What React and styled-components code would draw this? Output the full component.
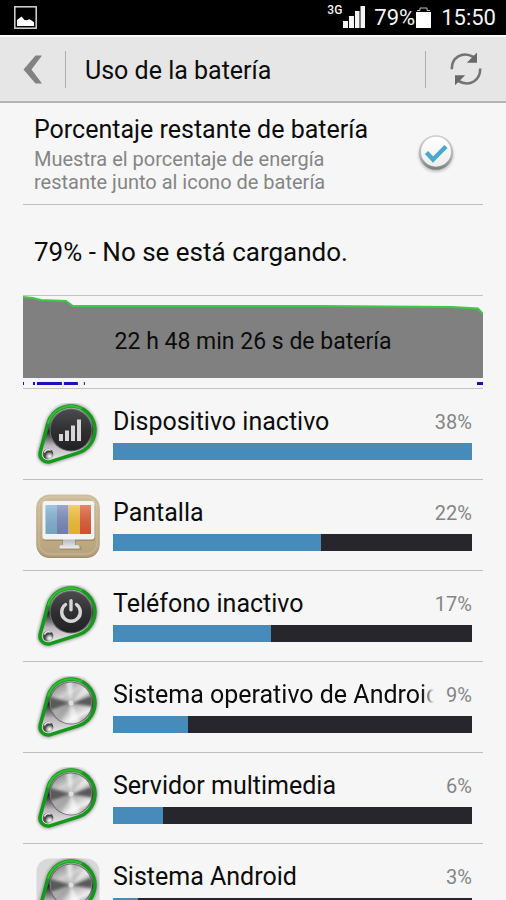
import React from 'react';
import styled, { createGlobalStyle } from 'styled-components';

const GlobalStyle = createGlobalStyle`
  *, *::before, *::after { box-sizing: border-box; }
  body { margin: 0; background: #f6f6f6; }
  body, button, input { font-family: Roboto, "Noto Sans", sans-serif; }
`;

const Screen = styled.div`
  display: flex;
  flex-direction: column;
  height: 100vh;
  background: #f6f6f6;
  color: #0c0c0c;
`;

const StatusBar = styled.div`
  flex: none;
  display: flex;
  align-items: center;
  justify-content: space-between;
  height: 35px;
  padding: 0 9px 0 14px;
  background: #000;
  color: #f4f4f4;
`;

const StatusGroup = styled.div`
  display: flex;
  align-items: center;
`;

const NetworkType = styled.span`
  align-self: flex-start;
  margin-right: 1px;
  font-size: 12px;
  font-weight: 500;
  line-height: 12px;
`;

const StatusText = styled.span`
  margin: 0 1px 0 ${(p) => p.$gap}px;
  font-size: 22px;
  line-height: 28px;
`;

const ActionBar = styled.header`
  flex: none;
  display: flex;
  align-items: center;
  height: 68px;
  border-top: 2px solid #fafafa;
  border-bottom: 2px solid #b4b4b4;
  background: #e6e6e6;
`;

const IconButton = styled.button`
  display: grid;
  place-items: center;
  width: ${(p) => p.$width}px;
  height: 64px;
  padding: 0;
  border: 0;
  background: none;
  cursor: pointer;
`;

const Divider = styled.span`
  width: 1px;
  height: 37px;
  background: #adadad;
`;

const PageTitle = styled.h1`
  flex: 1;
  margin: 0;
  padding: 3px 0 0 19px;
  font-size: 25px;
  font-weight: 400;
  line-height: 32px;
`;

const Content = styled.main`
  flex: 1;
  min-height: 0;
  padding: 0 23px;
  overflow-y: auto;
  scrollbar-width: none;
`;

const Setting = styled.label`
  display: flex;
  align-items: center;
  justify-content: space-between;
  height: 102px;
  padding: 0 26px 0 11px;
  border-bottom: 1px solid #bfbfbf;
  cursor: pointer;
`;

const SettingText = styled.span`
  display: flex;
  flex-direction: column;
  gap: 2px;
`;

const SettingTitle = styled.span`
  font-size: 25px;
  line-height: 32px;
`;

const SettingHint = styled.span`
  max-width: 320px;
  color: #858585;
  font-size: 20px;
  line-height: 23px;
`;

const RoundCheck = styled.span`
  display: grid;
  flex: none;
  width: 42px;
  height: 42px;

  & > * { grid-area: 1 / 1; }
`;

const CheckInput = styled.input`
  width: 42px;
  height: 42px;
  margin: 0;
  opacity: 0;
  cursor: pointer;

  &:not(:checked) + svg .tick { display: none; }
`;

const ChargeState = styled.p`
  margin: 0;
  padding: 4px 11px 0;
  font-size: 26px;
  line-height: 86px;
`;

const History = styled.section`
  display: grid;
  grid-template-rows: 82px 10px;
  border: solid #c4c4c4;
  border-width: 1px 0;
`;

const HistoryPlot = styled.div`
  display: grid;
  align-items: center;

  & > * { grid-area: 1 / 1; }
`;

const PlotSvg = styled.svg`
  display: block;
  width: 100%;
  height: 82px;
`;

const HistoryLabel = styled.span`
  padding-top: 10px;
  text-align: center;
  font-size: 23px;
  line-height: 28px;
`;

const ActivityStrip = styled.svg`
  display: block;
  width: 100%;
  height: 9px;
`;

const UsageList = styled.ul`
  margin: 0;
  padding: 0;
  list-style: none;
`;

const UsageRow = styled.li`
  display: grid;
  grid-template-columns: 64px minmax(0, 1fr);
  column-gap: 13px;
  height: 91px;
  padding: 14px 11px 0 13px;
  border-bottom: 1px solid #bfbfbf;
`;

const UsageBody = styled.div`
  display: flex;
  flex-direction: column;
  gap: 2px;
`;

const UsageHead = styled.div`
  display: flex;
  align-items: center;
  gap: 12px;
  height: 38px;
`;

const UsageName = styled.span`
  flex: 1;
  min-width: 0;
  overflow: hidden;
  white-space: nowrap;
  font-size: 25px;
  line-height: 36px;
  mask-image: ${(p) => (p.$fade ? 'linear-gradient(to left, transparent, #000 12px)' : 'none')};
`;

const UsagePercent = styled.span`
  color: #858585;
  font-size: 20px;
  line-height: 36px;
`;

const Meter = styled.div`
  height: 17px;
  background: #27262c;
`;

const MeterFill = styled.div`
  height: 100%;
  background: #478bba;
`;

const SharedDefs = styled.svg`
  display: block;
`;

function PictureIcon() {
  return (
    <svg width="23" height="23" viewBox="0 0 23 23" aria-hidden="true">
      <rect x="0.8" y="0.8" width="21.4" height="21.4" fill="none" stroke="#d8d8d8" strokeWidth="1.5" />
      <path d="M3 20V14l4.500-3.500 3 3.500 2 .3 3-1 2.500 1.500 2 1.500V20z" fill="#fff" />
    </svg>
  );
}

function SignalIcon() {
  return (
    <svg width="23" height="23" viewBox="0 0 23 23" fill="#f4f4f4" aria-hidden="true">
      <rect x="0" y="15" width="5" height="7" />
      <rect x="6" y="10" width="5" height="12" />
      <rect x="12" y="5" width="4.500" height="17" />
      <rect x="17.500" y="0" width="4.500" height="22" />
    </svg>
  );
}

function BatteryIcon() {
  return (
    <svg width="15" height="21" viewBox="0 0 15 21" aria-hidden="true">
      <path d="M1 3.500h3V1h7v2.500h3" fill="none" stroke="#bdbdbd" strokeWidth="1" />
      <rect x="0" y="5" width="15" height="16" fill="#fff" />
    </svg>
  );
}

function BackIcon() {
  return (
    <svg width="20" height="29" viewBox="0 0 20 29" aria-hidden="true">
      <path d="M12.500 0.500H19L8.500 14.500 19 28.500h-6.500L0.500 14.500z" fill="#828282" />
    </svg>
  );
}

function RefreshIcon() {
  return (
    <svg width="32" height="34" viewBox="0 0 32 34" aria-hidden="true">
      <g fill="none" stroke="#737373" strokeWidth="2.600">
        <path d="M1.800 17.300C1.500 6 12-1.500 23.500 5" />
        <path d="M30.200 16.500C30.500 28 20 35.500 8.500 29" />
      </g>
      <path d="M27 0.500V10.800H16.800zM5 33.200V23.200H15.200z" fill="#686868" />
    </svg>
  );
}

function CheckIcon() {
  return (
    <svg width="42" height="42" viewBox="0 0 42 42" aria-hidden="true">
      <defs>
        <linearGradient id="check-face" x1="0" y1="0" x2="0" y2="1">
          <stop offset="0" stopColor="#ffffff" />
          <stop offset="1" stopColor="#ededed" />
        </linearGradient>
        <linearGradient id="check-rim" x1="0" y1="0" x2="0" y2="1">
          <stop offset="0" stopColor="#cfcfcf" />
          <stop offset="0.600" stopColor="#b4b4b4" />
          <stop offset="1" stopColor="#7c7c7c" />
        </linearGradient>
        <filter id="check-soft" x="-20%" y="-20%" width="140%" height="140%">
          <feGaussianBlur stdDeviation="1.500" />
        </filter>
      </defs>
      <circle cx="21" cy="21.500" r="17" fill="#b5b5b5" filter="url(#check-soft)" />
      <circle cx="21" cy="19.500" r="17.200" fill="url(#check-rim)" />
      <circle cx="21" cy="18.700" r="15" fill="url(#check-face)" />
      <path className="tick" d="M11.500 19.500l6.500 7 13-13" fill="none" stroke="#4aa9c9" strokeWidth="4.400" />
    </svg>
  );
}

function IconDefs() {
  return (
    <SharedDefs width="0" height="0" aria-hidden="true">
      <defs>
        <linearGradient id="dark-disc" x1="0" y1="0" x2="0" y2="1">
          <stop offset="0" stopColor="#4b4b4d" />
          <stop offset="0.500" stopColor="#303032" />
          <stop offset="1" stopColor="#222224" />
        </linearGradient>
        <linearGradient id="metal-disc" x1="0.200" y1="0" x2="0.700" y2="1">
          <stop offset="0" stopColor="#858585" />
          <stop offset="0.300" stopColor="#cfcfcf" />
          <stop offset="0.550" stopColor="#aaaaaa" />
          <stop offset="0.850" stopColor="#ececec" />
          <stop offset="1" stopColor="#a0a0a0" />
        </linearGradient>
        <linearGradient id="shell" x1="0" y1="0" x2="0" y2="1">
          <stop offset="0" stopColor="#b5bab5" />
          <stop offset="0.250" stopColor="#8d928d" />
          <stop offset="0.450" stopColor="#222422" />
          <stop offset="0.700" stopColor="#b9b3ba" />
          <stop offset="1" stopColor="#efefef" />
        </linearGradient>
        <radialGradient id="knob" cx="0.650" cy="0.720" r="0.750">
          <stop offset="0" stopColor="#ffffff" />
          <stop offset="0.250" stopColor="#c4c4c4" />
          <stop offset="0.600" stopColor="#3f3f3f" />
          <stop offset="1" stopColor="#777777" />
        </radialGradient>
        <linearGradient id="tan-tile" x1="0" y1="0" x2="0" y2="1">
          <stop offset="0" stopColor="#cfbf9f" />
          <stop offset="0.500" stopColor="#c3af8a" />
          <stop offset="1" stopColor="#b7a27c" />
        </linearGradient>
        <linearGradient id="screen-shine" x1="0" y1="0" x2="0" y2="1">
          <stop offset="0" stopColor="#ffffff" stopOpacity="0.300" />
          <stop offset="1" stopColor="#555555" stopOpacity="0.100" />
        </linearGradient>
        <linearGradient id="stand" x1="0" y1="0" x2="0" y2="1">
          <stop offset="0" stopColor="#aab0b4" />
          <stop offset="1" stopColor="#eeeeee" />
        </linearGradient>
        <clipPath id="disc-clip"><circle cx="35" cy="27" r="20.500" /></clipPath>
        <filter id="soft" x="-30%" y="-30%" width="160%" height="160%">
          <feGaussianBlur stdDeviation="1.500" />
        </filter>
      </defs>
    </SharedDefs>
  );
}

const DROP = 'M11.8 20.8A24 24 0 1 1 42.2 49.9L14.4 58.600A8 8 0 0 1 4.300 48.900Z';

function DropIcon({ kind }) {
  const metal = kind === 'metal' || kind === 'tile';
  return (
    <svg width="64" height="64" viewBox="0 0 64 64" aria-hidden="true">
      {kind === 'tile' && <rect x="0.500" y="0.500" width="63" height="63" rx="13" fill="#d9d9db" />}
      <path d={DROP} fill="#8d858b" stroke="#91858f" strokeWidth="5.500" filter="url(#soft)" opacity="0.800" />
      <path d={DROP} fill="url(#shell)" stroke="#149a1b" strokeWidth="3.600" />
      <path d="M11.8 20.8A24 24 0 0 1 46 5.700" fill="none" stroke="#35bd38" strokeWidth="2" />
      <circle cx="35" cy="27" r="21.500" fill="#716a70" />
      <circle cx="35" cy="27" r="20.500" fill={metal ? 'url(#metal-disc)' : 'url(#dark-disc)'} />
      {metal && (
        <g clipPath="url(#disc-clip)">
          <g filter="url(#soft)">
            <path d="M35 27L12 20V35zM35 27L58 19V31z" fill="#404040" opacity="0.800" />
            <path d="M35 27L29 3H37zM35 27L33 50H47zM35 27L51 7 58 15z" fill="#fff" opacity="0.600" />
            <path d="M35 27L15 43 24 50z" fill="#858585" opacity="0.400" />
          </g>
          <circle cx="35" cy="27" r="2.500" fill="#fff" opacity="0.600" />
        </g>
      )}
      {kind === 'signal' && (
        <g fill="#d6d6d6">
          <rect x="23" y="31" width="4" height="7" />
          <rect x="29" y="27.500" width="4" height="10.500" />
          <rect x="35" y="22.500" width="4" height="15.500" />
          <rect x="41" y="16.500" width="4" height="21.500" />
        </g>
      )}
      {kind === 'power' && (
        <g fill="none" stroke="#d6d6d6" strokeWidth="3.400" strokeLinecap="round">
          <path d="M29.500 19.500a9.300 9.300 0 1 0 11 0" />
          <path d="M35 15.800v9" />
        </g>
      )}
      <circle cx="12" cy="51" r="6" fill="#dcdcdc" />
      <circle cx="12" cy="51" r="5.400" fill="url(#knob)" />
      <path d="M8.500 49.500a4 4 0 0 1 6-2.200" fill="none" stroke="#eee" strokeWidth="1.400" />
    </svg>
  );
}

function MonitorIcon() {
  return (
    <svg width="64" height="64" viewBox="0 0 64 64" aria-hidden="true">
      <rect x="0.500" y="1" width="63" height="63" rx="13" fill="#a18e6c" />
      <rect x="0.500" y="0.500" width="63" height="62" rx="13" fill="url(#tan-tile)" />
      <rect x="3" y="3" width="58" height="57" rx="11" fill="none" stroke="#e3d7be" strokeWidth="1" opacity="0.400" />
      <rect x="7" y="9" width="52" height="38" rx="3" fill="#8c7a5c" opacity="0.600" />
      <path d="M26 45h14v7h3.500q2 0 2 2v2h-22v-2q0-2 2-2H26z" fill="#8c7a5c" opacity="0.500" />
      <path d="M27 44h12v7h2.500q2 0 2 2v1.500h-20V53q0-2 2-2H27z" fill="url(#stand)" />
      <rect x="6.500" y="7" width="52" height="38.500" rx="3" fill="#f3f3f4" />
      <rect x="9.500" y="11" width="11.500" height="29" fill="#7aaed0" />
      <rect x="21" y="11" width="11.500" height="29" fill="#7283b6" />
      <rect x="32.500" y="11" width="11.500" height="29" fill="#f2bb2c" />
      <rect x="44" y="11" width="11" height="29" fill="#dc5429" />
      <rect x="9.500" y="11" width="45.500" height="29" fill="url(#screen-shine)" />
    </svg>
  );
}

const CONSUMERS = [
  { name: 'Dispositivo inactivo', percent: 38, share: 100, icon: 'signal' },
  { name: 'Pantalla', percent: 22, share: 58, icon: 'monitor' },
  { name: 'Teléfono inactivo', percent: 17, share: 44, icon: 'power' },
  { name: 'Sistema operativo de Android', percent: 9, share: 21, icon: 'metal', fade: true },
  { name: 'Servidor multimedia', percent: 6, share: 14, icon: 'metal' },
  { name: 'Sistema Android', percent: 3, share: 7, icon: 'tile' },
];

const ACTIVE_SPANS = [[0, 1], [10, 2], [14, 25], [41, 14], [61, 1], [455, 6]];

function Consumer({ name, percent, share, icon, fade }) {
  return (
    <UsageRow>
      {icon === 'monitor' ? <MonitorIcon /> : <DropIcon kind={icon} />}
      <UsageBody>
        <UsageHead>
          <UsageName $fade={fade}>{name}</UsageName>
          <UsagePercent>{percent}%</UsagePercent>
        </UsageHead>
        <Meter role="meter" aria-label={name} aria-valuemin={0} aria-valuemax={100} aria-valuenow={share}>
          <MeterFill style={{ width: `${share}%` }} />
        </Meter>
      </UsageBody>
    </UsageRow>
  );
}

export default function App() {
  return (
    <Screen>
      <GlobalStyle />
      <StatusBar>
        <PictureIcon />
        <StatusGroup>
          <NetworkType>3G</NetworkType>
          <SignalIcon />
          <StatusText $gap={8}>79%</StatusText>
          <BatteryIcon />
          <StatusText $gap={10}>15:50</StatusText>
        </StatusGroup>
      </StatusBar>
      <ActionBar>
        <IconButton type="button" aria-label="Atrás" $width={65}><BackIcon /></IconButton>
        <Divider />
        <PageTitle>Uso de la batería</PageTitle>
        <Divider />
        <IconButton type="button" aria-label="Actualizar" $width={80}><RefreshIcon /></IconButton>
      </ActionBar>
      <Content>
        <Setting>
          <SettingText>
            <SettingTitle>Porcentaje restante de batería</SettingTitle>
            <SettingHint>Muestra el porcentaje de energía restante junto al icono de batería</SettingHint>
          </SettingText>
          <RoundCheck>
            <CheckInput type="checkbox" defaultChecked />
            <CheckIcon />
          </RoundCheck>
        </Setting>
        <ChargeState>79% - No se está cargando.</ChargeState>
        <History>
          <HistoryPlot>
            <PlotSvg viewBox="0 0 461 82" preserveAspectRatio="none" aria-hidden="true">
              <path d="M0 1L10 2 18 4 43 5 50 10H300L430 11 456 12.500 461 18V82H0z" fill="#808080" />
              <path d="M0 1L10 2 18 4 43 5 50 10H300L430 11 456 12.500 461 18" fill="none" stroke="#3fc944" strokeWidth="2" />
            </PlotSvg>
            <HistoryLabel>22 h 48 min 26 s de batería</HistoryLabel>
          </HistoryPlot>
          <ActivityStrip viewBox="0 0 461 9" preserveAspectRatio="none" aria-hidden="true">
            {ACTIVE_SPANS.map(([x, width]) => (
              <rect key={x} x={x} y="4" width={width} height="3" fill="#1a0fc4" />
            ))}
          </ActivityStrip>
        </History>
        <IconDefs />
        <UsageList>
          {CONSUMERS.map((item) => <Consumer key={item.name} {...item} />)}
        </UsageList>
      </Content>
    </Screen>
  );
}
